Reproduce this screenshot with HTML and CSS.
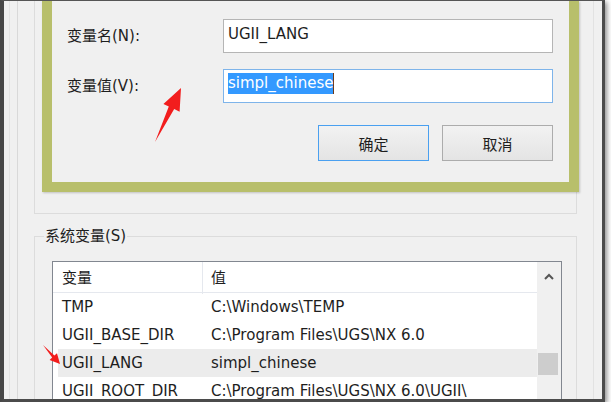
FILE: index.html
```html
<!DOCTYPE html>
<html lang="zh-CN">
<head>
  <meta charset="UTF-8">
  <title>环境变量</title>
  <link rel="stylesheet" href="styles.css">
</head>
<body>
  <div class="window">
    <div class="page">
      <div class="panel">
        <!-- 用户变量分组（上半部分被编辑框挡住） -->
        <div class="group-user"></div>

        <fieldset class="group-sys">
          <legend>系统变量(S)</legend>
          <div class="listview">
            <div class="lv-body">
              <div class="lv-head">
                <div class="col">变量</div>
                <div class="col">值</div>
              </div>
              <div class="lv-row"><div class="col">TMP</div><div class="col">C:\Windows\TEMP</div></div>
              <div class="lv-row"><div class="col">UGII_BASE_DIR</div><div class="col">C:\Program Files\UGS\NX 6.0</div></div>
              <div class="lv-row hot"><div class="col">UGII_LANG</div><div class="col">simpl_chinese</div></div>
              <div class="lv-row"><div class="col">UGII_ROOT_DIR</div><div class="col">C:\Program Files\UGS\NX 6.0\UGII\</div></div>
            </div>
            <div class="scrollbar">
              <div class="sb-up">
                <svg width="10" height="7" viewBox="0 0 10 7"><path d="M1 6 L5 2 L9 6" fill="none" stroke="#555" stroke-width="2"/></svg>
              </div>
              <div class="sb-track"><div class="sb-thumb"></div></div>
            </div>
          </div>
        </fieldset>
      </div>
    </div>

    <!-- 编辑系统变量 对话框 -->
    <div class="edit-dialog">
      <div class="form">
        <label>变量名(N):</label>
        <div class="field">UGII_LANG</div>
        <label>变量值(V):</label>
        <div class="field focused"><span class="sel">simpl_chinese</span></div>
      </div>
      <div class="buttons">
        <button class="btn default">确定</button>
        <button class="btn">取消</button>
      </div>
    </div>

    <!-- 标注箭头 -->
    <svg class="marks" viewBox="0 0 611 411">
      <polygon points="181,88 179.6,111.7 174.2,109.1 155,142 168.8,106.5 163.4,103.9" fill="#f21d1d"/>
      <polygon points="60,364 49.6,359.9 52.2,357.5 43,345 54.4,355.5 57,353.2" fill="#f21d1d"/>
    </svg>
  </div>
</body>
</html>
```

FILE: styles.css
```css
* {
  box-sizing: border-box;
}
body {
  margin: 0;
  background: #fff;
  font-family: "DejaVu Sans", "Noto Sans CJK SC", sans-serif;
  font-size: 15px;
  color: #1e1e1e;
}

/* 外层窗口 */
.window {
  position: relative;
  width: 605px;
  height: 402px;
  background: #f0f0f0;
  border-top: 1px solid #555;
  border-left: 4px solid #474747;
  border-right: 3px solid #4b4b4b;
  border-bottom: 3px solid #4b4b4b;
  box-shadow: 2px 2px 5px rgba(0, 0, 0, 0.45);
  overflow: hidden;
}
.page {
  height: 100%;
  margin-left: 5px;
  padding-left: 7px;
  border-left: 1px solid #e4e4e4;
}
.panel {
  height: 100%;
  margin-right: 8px;
  padding: 0 16px;
  border-left: 1px solid #d9d9d9;
  border-right: 1px solid #e2e2e2;
}
.group-user {
  height: 213px;
  border: 1px solid #dcdcdc;
  border-top: none;
}

/* 系统变量分组 */
.group-sys {
  margin: 13px 0 0;
  padding: 0;
  border: 1px solid #dcdcdc;
  min-width: 0;
}
.group-sys legend {
  margin-left: 9px;
  padding: 0 1px;
  line-height: 18px;
}
.listview {
  display: flex;
  width: 510px;
  height: 160px;
  margin: 16px 0 0 17px;
  border: 1px solid #828790;
  background: #fff;
}
.lv-body {
  width: 484px;
}
.lv-head,
.lv-row {
  display: grid;
  grid-template-columns: 150px 1fr;
}
.lv-head {
  height: 31px;
  border-bottom: 1px solid #e5e8ee;
}
.lv-head .col {
  line-height: 32px;
}
.lv-head .col:first-child {
  border-right: 1px solid #e5e8ee;
}
.col {
  padding-left: 9px;
  white-space: nowrap;
}
.col + .col {
  padding-left: 8px;
}
.lv-row {
  height: 28px;
  line-height: 28px;
}
.lv-row.hot {
  background: linear-gradient(to right, transparent 5px, #ececec 5px);
}
.scrollbar {
  width: 24px;
  background: #f0f0f0;
}
.sb-up {
  height: 31px;
  display: flex;
  justify-content: center;
  padding-top: 11px;
}
.sb-up svg {
  display: block;
}
.sb-track {
  padding-top: 60px;
}
.sb-thumb {
  height: 22px;
  margin: 0 3px 0 1px;
  background: #cdcdcd;
}

/* 编辑变量对话框 */
.edit-dialog {
  position: absolute;
  left: 38px;
  top: 0;
  width: 537px;
  padding: 18px 16px 21px 15px;
  background: #f0f0f0;
  border: 10px solid #b8bf6b;
  border-top: none;
  box-shadow: 1px 1px 2px rgba(0, 0, 0, 0.2);
}
.form {
  display: grid;
  grid-template-columns: 156px 330px;
  row-gap: 16px;
  align-items: center;
}
.form label {
  line-height: 20px;
}
.field {
  height: 34px;
  padding-left: 4px;
  line-height: 28px;
  background: #fff;
  border: 1px solid #b5b5b5;
  white-space: nowrap;
}
.field.focused {
  border-color: #7eb4ea;
}
.sel {
  display: inline-block;
  vertical-align: top;
  margin-top: 3px;
  line-height: 21px;
  background: #3399ff;
  color: #fff;
  border-right: 1px solid #6a3a1a;
}
.buttons {
  display: flex;
  justify-content: flex-end;
  gap: 13px;
  margin-top: 22px;
}
.btn {
  width: 111px;
  height: 36px;
  font: inherit;
  color: inherit;
  background: linear-gradient(#f2f2f2, #e4e4e4);
  border: 1px solid #acacac;
  border-radius: 0;
}
.btn.default {
  border-color: #4aa0f0;
}

.marks {
  position: absolute;
  left: -4px;
  top: -1px;
  width: 611px;
  height: 411px;
  pointer-events: none;
}
```
